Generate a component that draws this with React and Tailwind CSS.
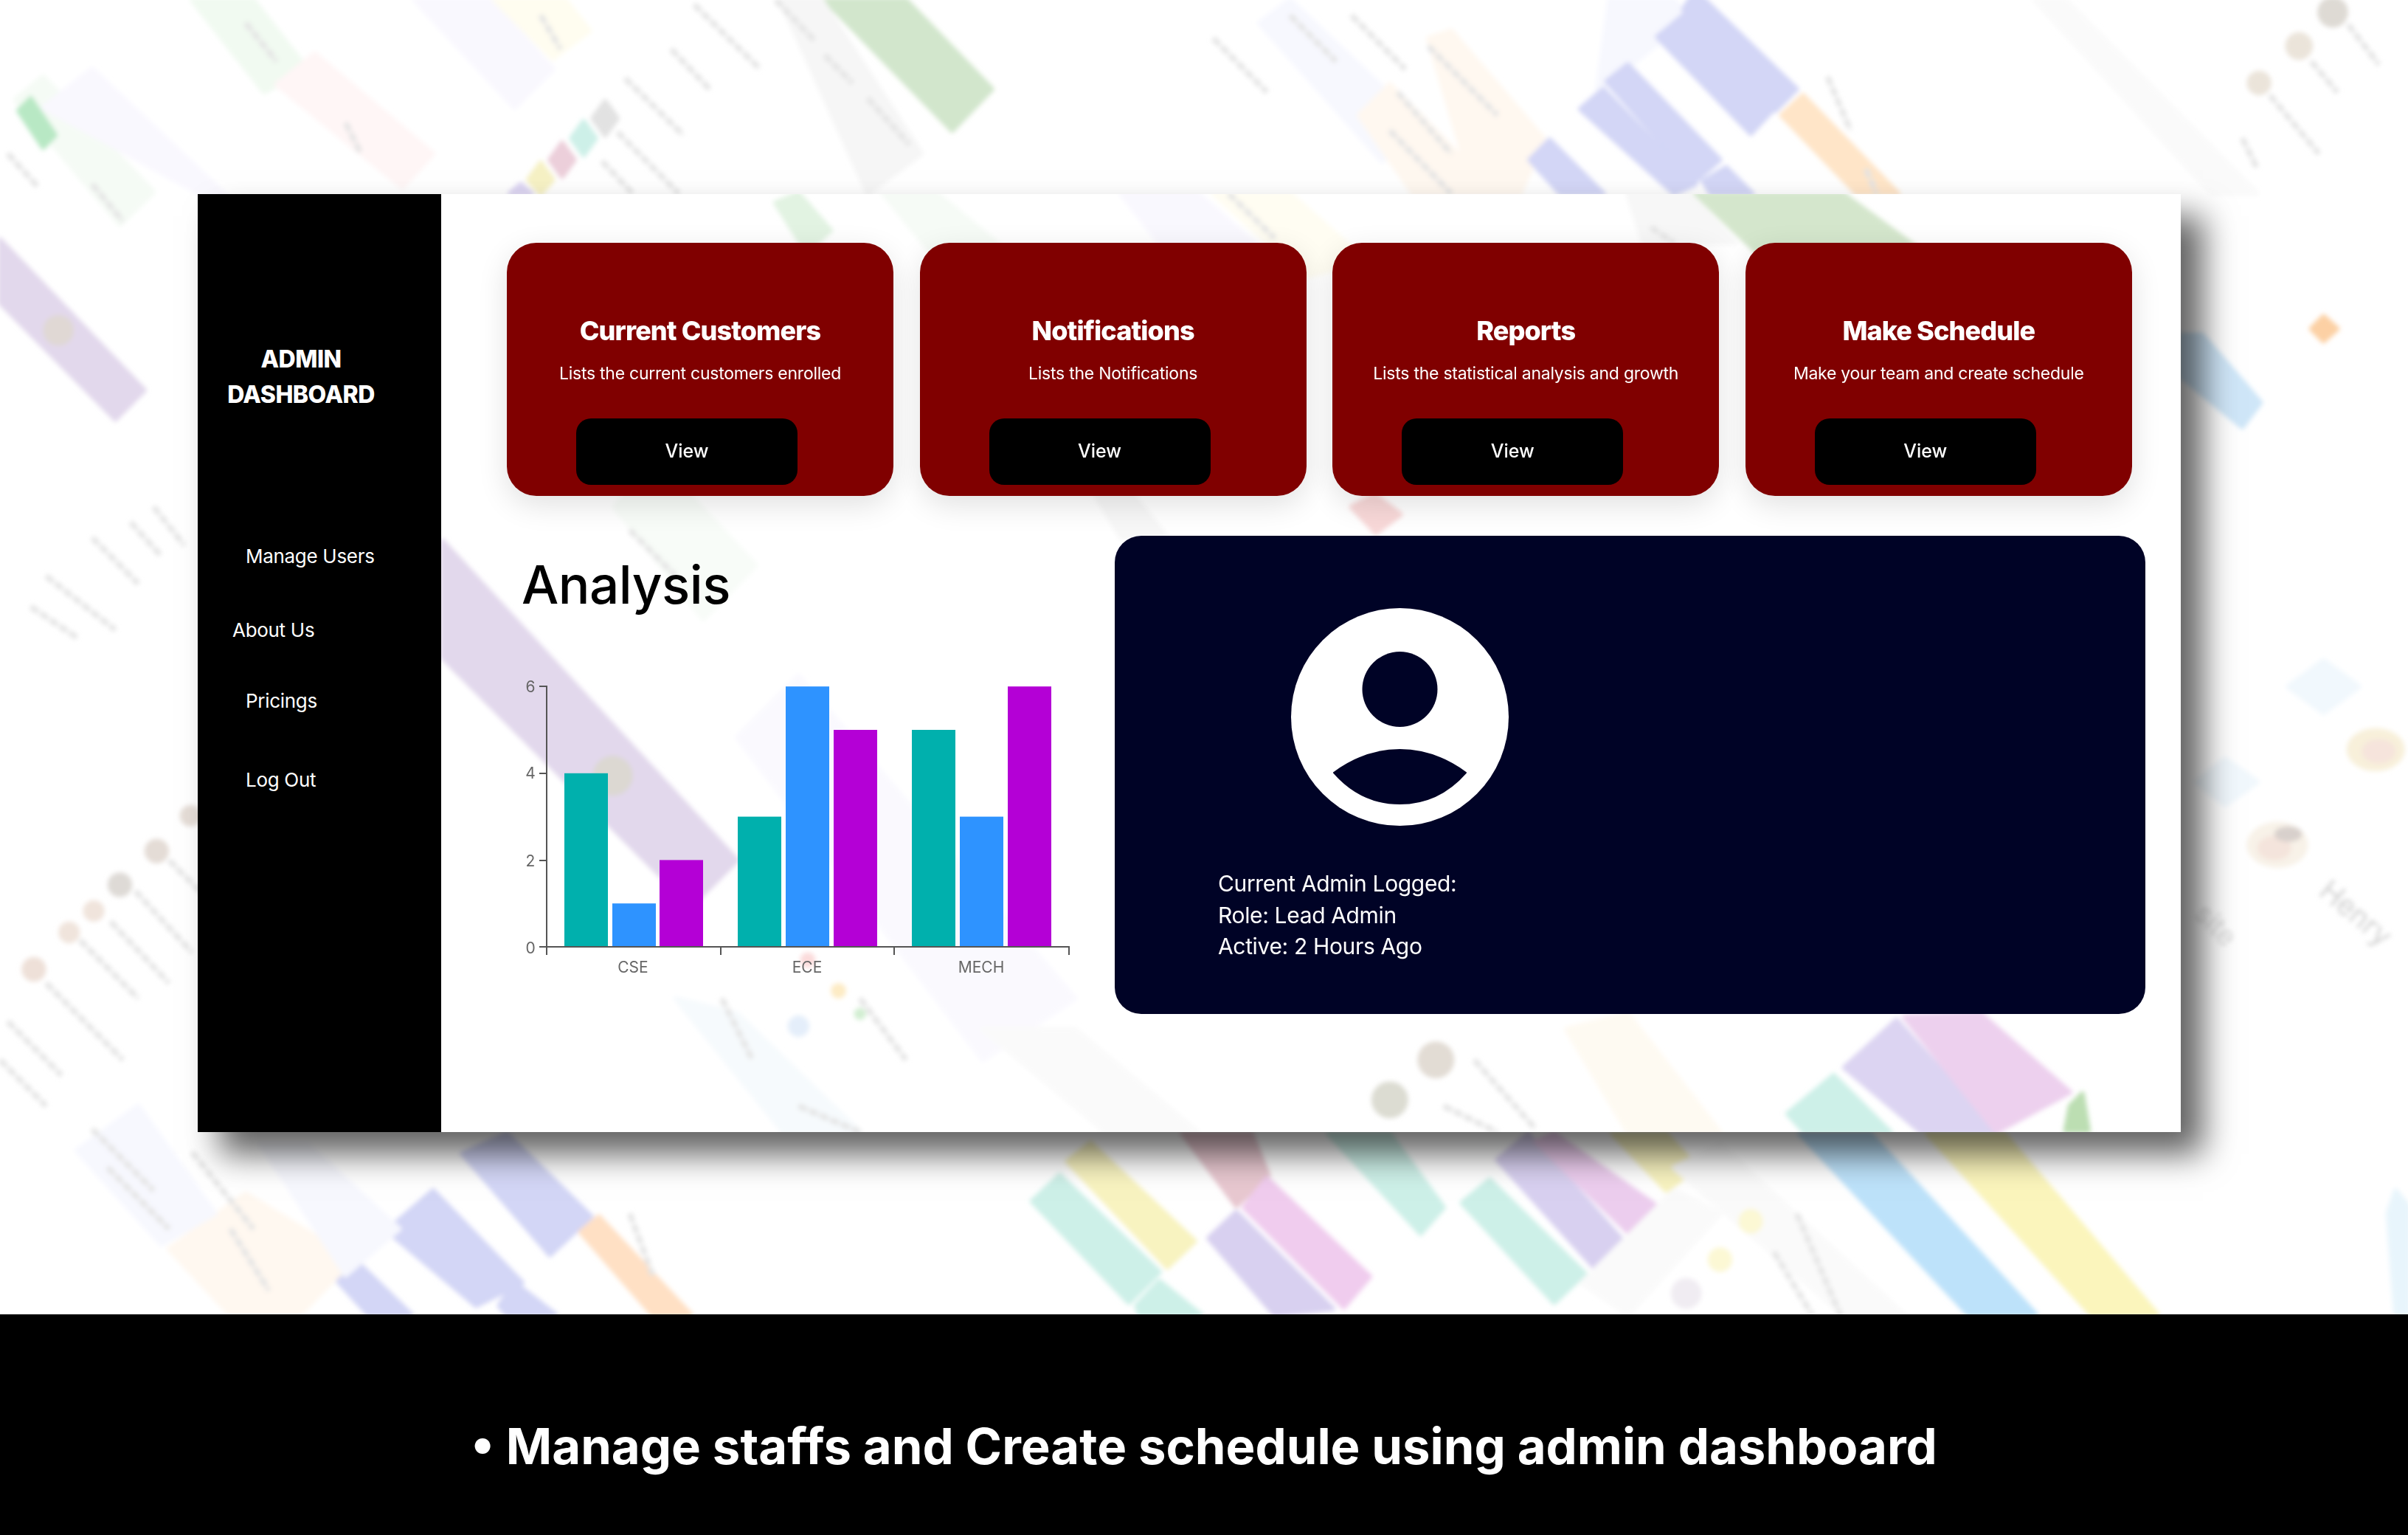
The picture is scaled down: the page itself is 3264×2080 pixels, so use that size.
const poppins = { fontFamily: "Inter, 'Noto Sans', sans-serif" };

// blurred schedule artwork behind the panel, coords in the shrunk 1568 wide space
const outerShapes = [
  ["#f1faf1", "125,0 165,0 200,45 172,60"],
  ["#f5fbf5", "10,65 28,50 100,125 78,146"],
  ["#b8e8c4", "12,72 20,64 36,88 28,96"],
  ["#fff6f6", "180,55 205,35 282,100 262,122"],
  ["#f9f8fe", "270,0 320,0 360,45 335,70"],
  ["#f9f8fe", "28,70 60,45 150,130 130,126"],
  ["#fffdf0", "322,0 368,0 384,20 360,38"],
  ["#d2e6cc", "537,0 590,0 646,58 620,85"],
  ["#f6f6f6", "508,0 535,0 600,100 565,126"],
  ["#e2e2e2", "386,77 394,66 402,77 394,88"],
  ["#cdf0e8", "372,90 380,79 388,90 380,101"],
  ["#eccfda", "358,104 366,93 374,104 366,115"],
  ["#f6f1c4", "344,117 352,106 360,117 352,126"],
  ["#dcd4f2", "332,126 339,120 346,126"],
  ["#f7f8fe", "820,15 840,0 925,80 900,105"],
  ["#fff8f0", "930,25 945,20 1005,90 990,126 960,126"],
  ["#fff8f0", "885,75 905,55 975,126 920,126"],
  ["#f7f8fe", "1048,0 1090,0 1100,12 1040,60"],
  ["#d3d6f6", "1096,6 1104,-6 1170,58 1156,72"],
  ["#d3d6f6", "1079,24 1096,10 1154,72 1140,87"],
  ["#d3d6f6", "1046,53 1060,42 1120,104 1104,118"],
  ["#d3d6f6", "1029,71 1044,58 1104,120 1090,126"],
  ["#d3d6f6", "996,104 1009,91 1044,126 1016,126"],
  ["#d3d6f6", "1109,118 1124,109 1141,126 1114,126"],
  ["#ffe5c8", "1160,75 1174,62 1236,126 1209,126"],
  ["#fafafa", "1325,0 1345,0 1470,126 1440,126"],
  ["#e2d8ec", "0,156 94,254 75,273 0,197"],
  ["#cfe6f8", "1420,218 1434,218 1472,262 1460,278 1420,245"],
  ["#fcd0a4", "1505,214 1513,206 1522,214 1513,222"],
  ["#f1f8fd", "1490,447 1513,430 1536,447 1513,464"],
  ["#f1f8fd", "1430,509 1449,494 1470,509 1449,524"],
  ["#d3d6f6", "301,751 330,738 385,792 358,817"],
  ["#d3d6f6", "252,801 282,775 340,835 310,850"],
  ["#d3d6f6", "220,834 232,821 268,856 240,856"],
  ["#d3d6f6", "325,850 335,835 362,856 330,856"],
  ["#ffe0c4", "378,802 390,792 450,856 425,856"],
  ["#fff8f0", "110,813 160,777 230,820 195,856 150,856"],
  ["#f7f8fe", "50,749 90,720 140,790 105,810"],
  ["#f7f8fe", "170,745 200,745 260,800 225,830"],
  ["#cdf0e8", "672,782 690,765 755,828 735,848"],
  ["#cdf0e8", "740,850 755,834 782,856 742,856"],
  ["#cdf0e8", "952,783 970,768 1032,829 1012,848"],
  ["#cdf0e8", "865,738 905,738 940,786 925,803"],
  ["#f8f3c0", "695,756 710,744 778,808 760,825"],
  ["#e8c8d0", "770,738 815,738 826,765 805,785"],
  ["#f0ccee", "810,786 825,767 892,831 875,851"],
  ["#d8d0f0", "787,806 805,789 868,852 830,856"],
  ["#d8d0f0", "975,755 995,738 1057,808 1038,825"],
  ["#eccdee", "1000,743 1012,738 1080,786 1060,802"],
  ["#f8f3c0", "1050,738 1085,738 1105,760 1085,775"],
  ["#bde2fa", "1172,738 1218,738 1326,856 1282,856"],
  ["#fbf5bc", "1255,738 1305,738 1405,856 1362,856"],
  ["#fafafa", "1090,760 1120,745 1240,856 1200,856"],
  ["#fafafa", "1030,835 1090,775 1120,790 1060,856"],
  ["#e8f5fc", "1555,790 1560,775 1568,785 1568,856 1560,856"],
];

const innerShapes = [
  ["#f8fcf8", "400,330 428,300 492,368 458,403"],
  ["#e2d8ec", "288,352 480,560 450,590 288,428"],
  ["#e2f3e2", "505,132 520,126 541,150 525,164"],
  ["#f6fbf6", "575,126 610,126 700,200 660,230"],
  ["#f9f8fe", "730,126 780,126 830,170 780,190"],
  ["#fffdf2", "790,126 840,126 890,170 850,180"],
  ["#d4e6cc", "1104,126 1200,126 1260,170 1150,170"],
  ["#f7f7f7", "1060,126 1100,126 1130,158 1070,158"],
  ["#f8d8d8", "880,330 895,322 912,335 896,347"],
  ["#faf9fe", "480,480 520,440 700,650 640,690"],
  ["#fafafa", "640,670 700,670 780,737 720,737"],
  ["#f6fafd", "440,650 480,660 560,737 510,737"],
  ["#cdf0e8", "1164,725 1194,700 1231,737 1175,737"],
  ["#dcd4f2", "1201,695 1235,664 1300,737 1251,737"],
  ["#edd0ee", "1240,662 1290,660 1348,711 1300,737"],
  ["#bcdeb2", "1348,720 1356,712 1360,736 1345,736"],
  ["#f7f7f7", "700,300 720,300 760,350 730,350"],
  ["#fefaf2", "1020,670 1060,660 1120,737 1060,737"],
];

// [x1, y1, x2, y2] for the smudged rows of small text
const textSmudges = [
  [452, 3, 495, 45], [437, 32, 462, 58], [407, 51, 445, 88], [505, 0, 530, 26], [537, 36, 555, 54],
  [565, 64, 592, 94], [402, 86, 442, 126], [392, 105, 412, 126], [160, 15, 180, 40], [352, 10, 365, 32],
  [5, 100, 25, 122], [60, 120, 80, 144], [225, 80, 235, 100], [840, 10, 870, 40], [880, 10, 915, 45],
  [790, 25, 825, 60], [930, 30, 975, 75], [910, 60, 945, 100], [905, 85, 945, 126], [1529, 16, 1549, 42],
  [1505, 40, 1522, 60], [1478, 62, 1510, 100], [1190, 50, 1205, 85], [1215, 110, 1222, 126],
  [100, 330, 120, 355], [85, 340, 105, 362], [60, 350, 90, 380], [30, 375, 75, 410], [20, 395, 50, 415],
  [110, 560, 140, 590], [88, 580, 125, 620], [72, 600, 110, 640], [52, 612, 90, 650], [30, 640, 80, 690],
  [5, 665, 40, 700], [0, 690, 30, 720], [60, 735, 100, 775], [70, 760, 110, 800], [125, 750, 165, 800],
  [150, 800, 175, 840], [1170, 790, 1200, 860], [1155, 815, 1180, 856], [410, 790, 425, 830],
  [1460, 90, 1470, 110],
];

const innerSmudges = [
  [960, 690, 1000, 735], [940, 720, 975, 737], [560, 650, 590, 690], [520, 720, 560, 737],
  [470, 650, 490, 690], [800, 126, 830, 155], [1075, 148, 1090, 158], [410, 345, 440, 375],
];

const avatars = [
  [38, 215, 10, "#e0d8d4"], [102, 554, 8, "#e4dcd6"], [78, 576, 8, "#dedad6"], [61, 593, 7, "#f0e4dc"],
  [45, 607, 7, "#f0e4dc"], [22, 631, 8, "#eee0d8"], [124, 531, 7, "#e4dcd6"], [1519, 8, 10, "#dedad4"],
  [1497, 30, 9, "#ebe4da"], [1471, 54, 8, "#ebe4da"], [1120, 820, 8, "#fcf8d4"], [1140, 795, 8, "#fcf8d4"],
  [1098, 842, 10, "#f0ecf2"],
];

const innerDots = [
  [935, 690, 12, "#e2dcd4"], [905, 716, 12, "#dcdcd2"], [399, 505, 13, "#dcd8d2"], [526, 625, 5, "#fbdada"],
  [546, 645, 5, "#fdebc4"], [560, 660, 4, "#d2eed2"], [520, 668, 7, "#e4eefa"],
];

function BlurredArt({ shapes, smudges, dots, width, height, viewBox, children }) {
  return (
    <svg className="absolute top-0 left-0" width={width} height={height} viewBox={viewBox}>
      <defs>
        <filter id="soft" x="-5%" y="-5%" width="110%" height="110%">
          <feGaussianBlur stdDeviation="1.5" />
        </filter>
      </defs>
      <g filter="url(#soft)">
        {shapes.map((s, i) => (
          <polygon key={i} points={s[1]} fill={s[0]} stroke={s[0]} strokeWidth="3" strokeLinejoin="round" />
        ))}
        {smudges.map((l, i) => (
          <line key={i} x1={l[0]} y1={l[1]} x2={l[2]} y2={l[3]} stroke="#e4e4e4" strokeWidth="3.5" strokeDasharray="6 1.5" />
        ))}
        {dots.map((a, i) => (
          <circle key={i} cx={a[0]} cy={a[1]} r={a[2]} fill={a[3]} />
        ))}
        {children}
      </g>
    </svg>
  );
}

function Card({ title, text }) {
  return (
    <div className="w-[524px] h-[343px] rounded-[40px] bg-[#800000] shadow-[0_12px_40px_rgba(0,0,0,0.12)] pt-[96px] flex flex-col text-white">
      <h3 className="text-center text-[36px] leading-[46px] font-extrabold tracking-[-0.9px]">{title}</h3>
      <p className="text-center text-[23px] leading-[32px] mt-[19px] tracking-[-0.25px]">{text}</p>
      <button className="w-[300px] h-[90px] ml-[94px] mt-[45px] rounded-[20px] bg-black text-[25px] font-medium text-white">View</button>
    </div>
  );
}

function BarChart() {
  const groups = [
    { label: "CSE", x: [766, 831, 895], v: [4, 1, 2], lx: 859 },
    { label: "ECE", x: [1001, 1066, 1131], v: [3, 6, 5], lx: 1095 },
    { label: "MECH", x: [1237, 1302, 1367], v: [5, 3, 6], lx: 1331 },
  ];
  const colors = ["#00b0ad", "#2e93ff", "#b400d6"];
  return (
    <svg width="780" height="420" viewBox="700 915 780 420" className="mt-[80px] -ml-[8px]">
      {groups.map((g) =>
        g.v.map((v, i) => (
          <rect key={g.label + i} x={g.x[i]} y={1286 - v * 58.8} width="59" height={v * 58.8} fill={colors[i]} />
        ))
      )}
      <path d="M732 933H742V1286H732M742 1286H1450V1297M742 1286V1297M978 1286V1297M1213 1286V1297M732 1051H742M732 1169H742" fill="none" stroke="#555" strokeWidth="2" />
      {[[6, 941], [4, 1058], [2, 1177], [0, 1295]].map(([t, y]) => (
        <text key={t} x="720" y={y} textAnchor="middle" fontSize="21" fill="#666" fontFamily="Inter, sans-serif">{t}</text>
      ))}
      {groups.map((g) => (
        <text key={g.label} x={g.lx} y="1321" textAnchor="middle" fontSize="21" fill="#666" fontFamily="Inter, sans-serif">{g.label}</text>
      ))}
    </svg>
  );
}

export default function App() {
  const cards = [
    { title: "Current Customers", text: "Lists the current customers enrolled" },
    { title: "Notifications", text: "Lists the Notifications" },
    { title: "Reports", text: "Lists the statistical analysis and growth" },
    { title: "Make Schedule", text: "Make your team and create schedule" },
  ];

  return (
    <div className="w-[3264px] h-[2080px] flex flex-col bg-white overflow-hidden" style={poppins}>
      <div className="relative h-[1781px] pt-[263px] pl-[268px]">
        <BlurredArt shapes={outerShapes} smudges={textSmudges} dots={avatars} width={3264} height={1781} viewBox="0 0 1568 855.6">
          {/* the two big faces on the right */}
          <ellipse cx="1547" cy="488" rx="19" ry="14" fill="#f8f0da" />
          <ellipse cx="1549" cy="489" rx="11" ry="8" fill="#f6e4dc" />
          <ellipse cx="1483" cy="550" rx="20" ry="15" fill="#f8f2e8" />
          <ellipse cx="1481" cy="552" rx="11" ry="8" fill="#f4e4dc" />
          <ellipse cx="1490" cy="543" rx="9" ry="5" fill="#d8d0cc" />
          <text x="1509" y="582" fontSize="19" fill="#d0d0d0" transform="rotate(40 1509 582)" fontFamily="Inter, sans-serif">Henry</text>
          <text x="1428" y="596" fontSize="18" fill="#dadada" transform="rotate(45 1428 596)" fontFamily="Inter, sans-serif">site</text>
        </BlurredArt>

        <div className="relative w-[2688px] h-[1271px] flex bg-white shadow-[30px_30px_42px_rgba(0,0,0,0.62)]">
          <BlurredArt shapes={innerShapes} smudges={innerSmudges} dots={innerDots} width={2688} height={1271} viewBox="128.75 126.35 1291.3 610.6" />

          <aside className="relative w-[330px] bg-black text-white pt-[200px]">
            <h1 className="w-[280px] text-center text-[32px] leading-[48px] font-extrabold tracking-[-0.5px]">ADMIN<br />DASHBOARD</h1>
            <ul className="text-[26px] leading-[36px] tracking-[-0.3px]">
              <li className="mt-[177px] ml-[65px]">Manage Users</li>
              <li className="mt-[64px] ml-[47px]">About Us</li>
              <li className="mt-[60px] ml-[65px]">Pricings</li>
              <li className="mt-[71px] ml-[65px]">Log Out</li>
            </ul>
          </aside>

          <main className="relative flex-1 pt-[66px] pl-[89px]">
            <div className="flex gap-[35.6px]">
              {cards.map((c) => (
                <Card key={c.title} {...c} />
              ))}
            </div>

            <div className="flex mt-[54px]">
              <section className="w-[824px] pt-[26px] pl-[20px]">
                <h2 className="text-[71px] leading-[80px] font-medium text-black tracking-[-0.5px]">Analysis</h2>
                <BarChart />
              </section>

              <section className="w-[1397px] h-[648px] rounded-[36px] bg-[#000326] text-white pt-[98px]">
                <svg width="295" height="295" viewBox="0 0 295 295" className="ml-[239px]">
                  <circle cx="147.5" cy="147.5" r="147.5" fill="#fff" />
                  <circle cx="147.5" cy="110" r="51" fill="#000326" />
                  <path d="M58 223Q100 192 147.5 192Q195 192 237 223Q200 265 147.5 265Q95 265 58 223Z" fill="#000326" stroke="#000326" strokeWidth="2" strokeLinejoin="round" />
                </svg>
                <div className="ml-[140px] mt-[57px] text-[30px] leading-[42.5px] tracking-[-0.35px]">
                  <p>Current Admin Logged:</p>
                  <p>Role: Lead Admin</p>
                  <p>Active: 2 Hours Ago</p>
                </div>
              </section>
            </div>
          </main>
        </div>
      </div>

      <div className="flex-1 bg-black flex items-center justify-center pt-[58px]">
        <p className="text-white text-[67px] font-bold leading-none" style={{ fontFamily: "Inter, sans-serif" }}>• Manage staffs and Create schedule using admin dashboard</p>
      </div>
    </div>
  );
}
